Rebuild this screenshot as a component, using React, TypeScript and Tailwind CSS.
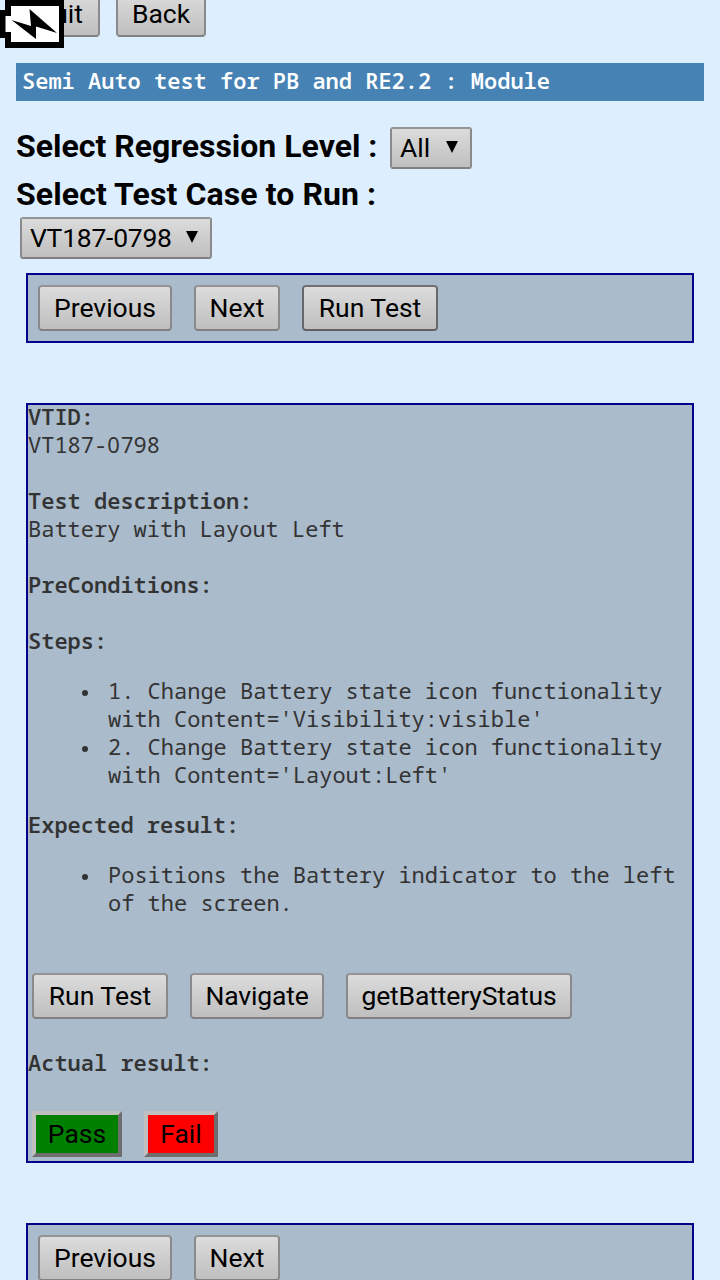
import type { ReactNode } from "react";

type ButtonProps = { children: ReactNode; className: string };

function Button({ children, className }: ButtonProps) {
  return (
    <button
      className={`flex h-[46px] shrink-0 items-center justify-center whitespace-nowrap rounded-[4px] border-2 bg-linear-to-b from-[#dcdcdc] to-[#bfbfbf] font-[Roboto,sans-serif] text-[26.5px] font-normal leading-[30px] text-black ${className}`}
    >
      {children}
    </button>
  );
}

const raised = "border-t-[#949494] border-x-[#8a8a8a] border-b-[#808080]";
const focused = "border-t-[#707070] border-x-[#686868] border-b-[#606060]";

function Select({ value, className }: { value: string; className: string }) {
  return (
    <button
      className={`flex h-[42px] shrink-0 items-center justify-between rounded-[3px] border-2 bg-linear-to-b from-[#dcdcdc] to-[#bfbfbf] pl-2 pr-3 font-[Roboto,sans-serif] text-[26.5px] font-normal leading-[30px] text-black ${raised} ${className}`}
    >
      <span>{value}</span>
      <svg className="mb-0.5 h-3 w-3" viewBox="0 0 12 12">
        <path d="M0 0h12L6 12z" />
      </svg>
    </button>
  );
}

function Label({ children }: { children: ReactNode }) {
  return <p className="font-semibold">{children}</p>;
}

function Item({ children }: { children: ReactNode }) {
  return (
    <li className="flex">
      <span className="ml-[54px] mr-5 mt-[14px] h-1.5 w-1.5 shrink-0 rounded-full bg-[#333333]" />
      <span>{children}</span>
    </li>
  );
}

function BatteryIcon() {
  return (
    <svg className="absolute left-0 top-0 h-12 w-16" viewBox="0 0 64 48">
      <path d="M5 0h59v48H5V38H0V10h5z" />
      <path d="M11 6h48v36H11V32H5.5V16H11z" fill="white" />
      <path d="M11.5 20 31 26 29.500 9 57 33 36 26.500V39z" />
    </svg>
  );
}

export default function App() {
  return (
    <div className="relative h-screen overflow-hidden bg-[#ddeeff] font-[Roboto,sans-serif] text-black">
      <header className="flex h-[37px] items-end gap-4 pl-4">
        <Button className={`w-[84px] pl-0.5 ${raised}`}>Quit</Button>
        <Button className={`w-[90px] ${raised}`}>Back</Button>
      </header>
      <BatteryIcon />

      <h1 className="mx-4 mt-[26px] flex h-[38px] items-center bg-[#4682b4] pb-1 pl-1.5 font-['Noto_Sans_Mono',monospace] text-[22px] font-semibold text-white">
        Semi Auto test for PB and RE2.2 : Module
      </h1>

      <div className="mt-[26px] flex h-[42px] items-center pl-4 text-[32px] font-bold leading-[38px]">
        <span className="w-[374px] whitespace-nowrap pb-1">Select Regression Level :</span>
        <Select value="All" className="w-[82px]" />
      </div>
      <div className="mt-[6px] h-[38px] pl-4 text-[32px] font-bold leading-[38px] tracking-[0.1px]">Select Test Case to Run :</div>
      <div className="mt-1 pl-5">
        <Select value="VT187-0798" className="w-[192px] tracking-[-0.25px]" />
      </div>

      <nav className="mx-[26px] mt-[14px] flex h-[70px] items-center border-2 border-[#00008b] bg-[#aabbcc] pl-2.5">
        <Button className={`w-[134px] ${raised}`}>Previous</Button>
        <Button className={`ml-[22px] w-[86px] ${raised}`}>Next</Button>
        <Button className={`ml-[22px] w-[136px] ${focused}`}>Run Test</Button>
      </nav>

      <main className="mx-[26px] mt-[60px] h-[760px] border-2 border-[#00008b] bg-[#aabbcc] font-['Noto_Sans_Mono',monospace] text-[22px] leading-[28px] text-[#333333]">
        <div className="-mt-[3px]">
          <Label>VTID:</Label>
        </div>
        <p>
          VT187-<span className="font-['Noto_Sans',sans-serif] tracking-[0.6px]">0</span>798
        </p>
        <div className="mt-7">
          <Label>Test description:</Label>
        </div>
        <p>Battery with Layout Left</p>
        <div className="mt-7">
          <Label>PreConditions:</Label>
        </div>
        <div className="mt-7">
          <Label>Steps:</Label>
        </div>
        <ul className="my-[22px]">
          <Item>1. Change Battery state icon functionality with Content='Visibility:visible'</Item>
          <Item>2. Change Battery state icon functionality with Content='Layout:Left'</Item>
        </ul>
        <Label>Expected result:</Label>
        <ul className="mt-[22px]">
          <Item>Positions the Battery indicator to the left of the screen.</Item>
        </ul>
        <div className="mt-[57px] flex gap-[22px] pl-1">
          <Button className={`w-[136px] ${raised}`}>Run Test</Button>
          <Button className={`w-[134px] tracking-[-0.15px] ${raised}`}>Navigate</Button>
          <Button className={`w-[226px] tracking-[-0.15px] ${raised}`}>getBatteryStatus</Button>
        </div>
        <div className="mt-[29px]">
          <Label>Actual result:</Label>
        </div>
        <div className="mt-[35px] flex gap-[22px] pl-1 font-[Roboto,sans-serif] text-[26.5px] text-black">
          <button className="flex h-[46px] w-[90px] items-center justify-center border-4 border-b-[#6e6e6e] border-l-[#c0c0c0] border-r-[#6e6e6e] border-t-[#c0c0c0] bg-[#008000]">
            Pass
          </button>
          <button className="flex h-[46px] w-[74px] items-center justify-center border-4 border-b-[#6e6e6e] border-l-[#c0c0c0] border-r-[#6e6e6e] border-t-[#c0c0c0] bg-[#ff0000]">
            Fail
          </button>
        </div>
      </main>

      <nav className="mx-[26px] mt-[60px] flex h-[70px] items-center border-2 border-[#00008b] bg-[#aabbcc] pl-2.5">
        <Button className={`w-[134px] ${raised}`}>Previous</Button>
        <Button className={`ml-[22px] w-[86px] ${raised}`}>Next</Button>
      </nav>
    </div>
  );
}
